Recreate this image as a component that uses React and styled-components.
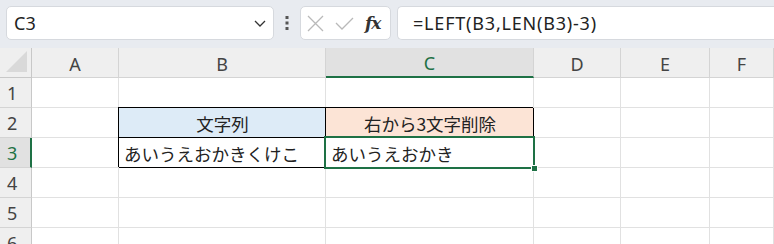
import React from "react";
import styled, { createGlobalStyle } from "styled-components";

const GlobalStyle = createGlobalStyle`
  html, body { margin: 0; padding: 0; background: #fff; }
  body { font-family: "Noto Sans", "Noto Sans CJK JP", sans-serif; overflow: hidden; }
`;

const GREEN = "#1e7145";

const Page = styled.div`
  width: 774px;
  height: 244px;
  overflow: hidden;
  background: #fff;
`;

const Toolbar = styled.div`
  height: 48px;
  box-sizing: border-box;
  padding: 6px 0 8px 6px;
  display: flex;
  align-items: stretch;
  background: #e8ebf0;
`;

const Box = styled.div`
  background: #fff;
  border: 1px solid #d6d9de;
  border-radius: 5px;
  box-sizing: border-box;
  display: flex;
  align-items: center;
`;

const NameBox = styled(Box)`
  width: 268px;
  padding: 0 6px 0 7px;
  justify-content: space-between;
  font-size: 18px;
  color: #222;
`;

const Dots = styled.div`
  width: 26px;
  display: flex;
  align-items: center;
  justify-content: center;
`;

const FxBox = styled(Box)`
  width: 91px;
  padding: 0 6px 0 6px;
  gap: 11px;
`;

const Fx = styled.span`
  font-family: "DejaVu Serif", "Liberation Serif", serif;
  font-style: italic;
  font-weight: bold;
  font-size: 17px;
  color: #333;
  letter-spacing: -1px;
`;

const FormulaBox = styled(Box)`
  margin-left: 6px;
  flex: 1;
  border-right: none;
  border-radius: 5px 0 0 5px;
  padding-left: 15px;
  font-size: 18px;
  letter-spacing: 0.8px;
  color: #222;
`;

const Grid = styled.div`
  display: grid;
  grid-template-columns: 32px 87px 207px 208px 87px 89px 64px;
  grid-auto-rows: 30px;
`;

const Head = styled.div`
  box-sizing: border-box;
  background: ${(p) => (p.active ? "#e1e1e1" : "#efefef")};
  border-right: 1px solid #d4d4d4;
  border-bottom: ${(p) => (p.active ? `2px solid ${GREEN}` : "1px solid #d4d4d4")};
  display: flex;
  align-items: center;
  justify-content: center;
  font-size: 18px;
  color: ${(p) => (p.active ? GREEN : "#444")};
  padding-top: 2px;
`;

const RowHead = styled.div`
  box-sizing: border-box;
  background: ${(p) => (p.active ? "#e1e1e1" : "#efefef")};
  border-right: ${(p) => (p.active ? `2px solid ${GREEN}` : "1px solid #c8c8c8")};
  border-bottom: 1px solid #d4d4d4;
  display: flex;
  align-items: center;
  padding-left: 7px;
  font-size: 18px;
  color: ${(p) => (p.active ? GREEN : "#444")};
`;

const Corner = styled.div`
  box-sizing: border-box;
  background: #efefef;
  border-right: 1px solid #c8c8c8;
  border-bottom: 1px solid #c8c8c8;
  display: flex;
  align-items: flex-end;
  justify-content: flex-end;
  padding: 0 4px 5px 0;
`;

const Cell = styled.div`
  position: relative;
  box-sizing: border-box;
  border-right: 1px solid ${(p) => (p.boxed ? "#000" : "#e1e1e1")};
  border-bottom: 1px solid ${(p) => (p.boxed ? "#000" : "#e1e1e1")};
  background: ${(p) => p.bg || "#fff"};
  box-shadow: ${(p) => (p.boxed ? "-1px -1px 0 0 #000" : "none")};
  z-index: ${(p) => (p.boxed ? 1 : 0)};
  display: flex;
  align-items: center;
  justify-content: ${(p) => (p.center ? "center" : "flex-start")};
  padding: 2px 4px 0 5px;
  font-family: "Noto Sans CJK JP", sans-serif;
  font-size: 17.5px;
  color: #222;
  white-space: nowrap;
`;

const Selection = styled.div`
  position: absolute;
  left: -2px;
  top: -2px;
  right: -2px;
  bottom: -2px;
  border: 2px solid ${GREEN};
  pointer-events: none;
  z-index: 2;
`;

const Handle = styled.div`
  position: absolute;
  right: -5px;
  bottom: -5px;
  width: 7px;
  height: 7px;
  background: ${GREEN};
  border: 1px solid #fff;
  box-sizing: border-box;
`;

const cols = ["A", "B", "C", "D", "E", "F"];

const cells = {
  "B2": { text: "文字列", bg: "#ddebf7", center: true, boxed: true },
  "C2": { text: "右から3文字削除", bg: "#fce4d6", center: true, boxed: true },
  "B3": { text: "あいうえおかきくけこ", boxed: true },
  "C3": { text: "あいうえおかき", boxed: true, selected: true },
};

const App = () => {
  return (
    <Page>
      <GlobalStyle />
      <Toolbar>
        <NameBox>
          <span>C3</span>
          <svg width="14" height="10" viewBox="0 0 14 10">
            <path d="M2 3 L7 8 L12 3" fill="none" stroke="#333" strokeWidth="1.3" />
          </svg>
        </NameBox>
        <Dots>
          <svg width="4" height="16" viewBox="0 0 4 16">
            <rect x="0.5" y="1" width="3" height="3" fill="#555" />
            <rect x="0.5" y="6.5" width="3" height="3" fill="#555" />
            <rect x="0.5" y="12" width="3" height="3" fill="#555" />
          </svg>
        </Dots>
        <FxBox>
          <svg width="17" height="17" viewBox="0 0 17 17">
            <path d="M1 1 L16 16 M16 1 L1 16" stroke="#b9b9b9" strokeWidth="1.3" />
          </svg>
          <svg width="19" height="15" viewBox="0 0 19 15">
            <path d="M1 7 L7 13 L18 2" fill="none" stroke="#b9b9b9" strokeWidth="1.3" />
          </svg>
          <Fx>fx</Fx>
        </FxBox>
        <FormulaBox>=LEFT(B3,LEN(B3)-3)</FormulaBox>
      </Toolbar>
      <Grid>
        <Corner>
          <svg width="21" height="21" viewBox="0 0 21 21">
            <path d="M21 0 L21 21 L0 21 Z" fill="#d9d9d9" />
          </svg>
        </Corner>
        {cols.map((c) => (
          <Head key={c} active={c === "C"}>
            {c}
          </Head>
        ))}
        {[1, 2, 3, 4, 5, 6].map((r) => (
          <React.Fragment key={r}>
            <RowHead active={r === 3}>{r}</RowHead>
            {cols.map((c) => {
              const d = cells[c + r] || {};
              return (
                <Cell key={c} bg={d.bg} center={d.center} boxed={d.boxed}>
                  {d.text}
                  {d.selected && (
                    <Selection>
                      <Handle />
                    </Selection>
                  )}
                </Cell>
              );
            })}
          </React.Fragment>
        ))}
      </Grid>
    </Page>
  );
};

export default App;
